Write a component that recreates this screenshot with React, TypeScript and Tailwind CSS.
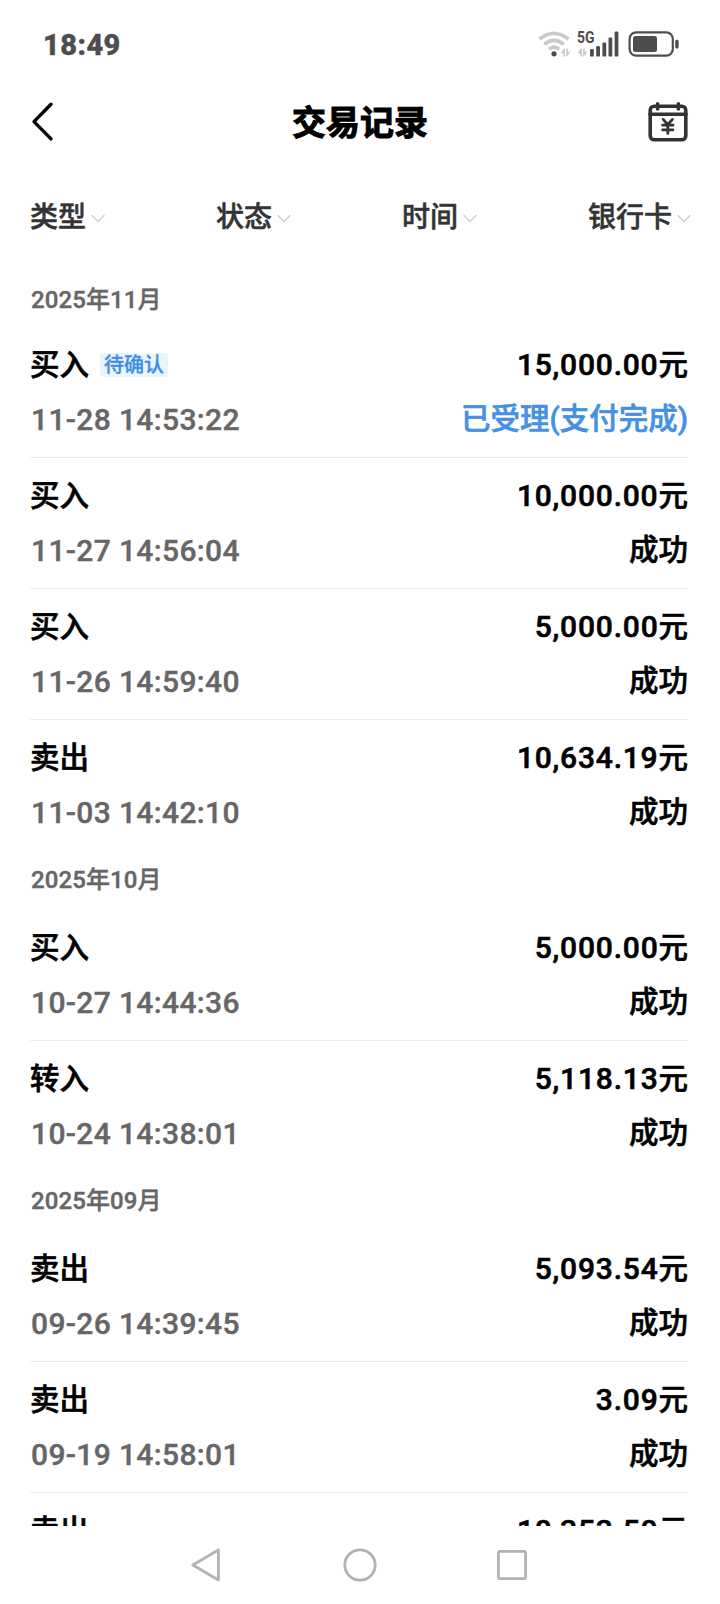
import React from 'react';

interface Transaction {
  type: string;
  tag?: string;
  time: string;
  amount: string;
  status: string;
  pending?: boolean;
}

interface MonthGroup {
  month: string;
  items: Transaction[];
}

const filters = ['类型', '状态', '时间', '银行卡'];

const groups: MonthGroup[] = [
  {
    month: '2025年11月',
    items: [
      { type: '买入', tag: '待确认', time: '11-28 14:53:22', amount: '15,000.00', status: '已受理(支付完成)', pending: true },
      { type: '买入', time: '11-27 14:56:04', amount: '10,000.00', status: '成功' },
      { type: '买入', time: '11-26 14:59:40', amount: '5,000.00', status: '成功' },
      { type: '卖出', time: '11-03 14:42:10', amount: '10,634.19', status: '成功' },
    ],
  },
  {
    month: '2025年10月',
    items: [
      { type: '买入', time: '10-27 14:44:36', amount: '5,000.00', status: '成功' },
      { type: '转入', time: '10-24 14:38:01', amount: '5,118.13', status: '成功' },
    ],
  },
  {
    month: '2025年09月',
    items: [
      { type: '卖出', time: '09-26 14:39:45', amount: '5,093.54', status: '成功' },
      { type: '卖出', time: '09-19 14:58:01', amount: '3.09', status: '成功' },
      { type: '卖出', time: '09-12 14:50:26', amount: '10,353.50', status: '成功' },
    ],
  },
];

function DataArrows({ x }: { x: number }) {
  return (
    <g transform={`translate(${x} 0)`} fill="#c9c9c9">
      <path d="M0 53.2 L3.6 48.4 H4.4 V56.6 H2.7 V53.2 Z" />
      <path d="M10 51.8 L6.4 56.6 H5.6 V48.4 H7.3 V51.8 Z" />
    </g>
  );
}

function StatusBar() {
  return (
    <div className="flex h-[88px] items-center justify-between pl-[43px] pr-[30px]">
      <span className="pt-[2px] text-[29px] font-extrabold leading-[86px] tracking-[0.5px] text-[#4d4d4d] [-webkit-text-stroke:0.5px]">18:49</span>
      <svg width="152" height="88" viewBox="538 0 152 88" fill="none">
        {/* wifi */}
        <g stroke="#c9c9c9" strokeWidth="3.6">
          <path d="M539.5 39.2 Q554 27.4 568.5 39.2" />
          <path d="M544.3 44.4 Q554 36.4 563.7 44.4" />
          <path d="M549 49.2 Q554 45 559 49.2" />
        </g>
        <circle cx="554" cy="53.8" r="2.6" fill="#4d4d4d" />
        <DataArrows x={560.5} />
        <DataArrows x={577.5} />
        <text x="577" y="43.4" fontSize="16.5" fontWeight="700" fill="#4d4d4d" textLength="17.5" lengthAdjust="spacingAndGlyphs">5G</text>
        {/* signal */}
        <g fill="#4d4d4d">
          <rect x="590" y="49" width="3.8" height="7.6" rx="1.2" />
          <rect x="596.2" y="46" width="3.8" height="10.6" rx="1.2" />
          <rect x="602.4" y="42.6" width="3.8" height="14" rx="1.2" />
          <rect x="608.5" y="37.6" width="3.8" height="19" rx="1.2" />
          <rect x="614.6" y="31.4" width="3.8" height="25.2" rx="1.2" />
        </g>
        {/* battery */}
        <rect x="629.6" y="32.4" width="43.2" height="23.2" rx="6.5" stroke="#4d4d4d" strokeWidth="2.2" />
        <rect x="633" y="36" width="24" height="16" rx="2.5" fill="#4d4d4d" />
        <rect x="675.2" y="39.8" width="3.4" height="8.6" rx="1.5" fill="#4d4d4d" />
      </svg>
    </div>
  );
}

function Header() {
  return (
    <div className="flex h-[68px] items-center justify-between pl-[31px] pr-[31px]">
      <svg width="42" height="44" viewBox="0 0 42 44" fill="none" stroke="#000" strokeWidth="3.4" strokeLinecap="round" strokeLinejoin="round">
        <path d="M20 4.3 L3 21.6 L20 38.9" />
      </svg>
      <h1 className="pt-[2px] text-[34px] font-bold leading-[66px] text-black [-webkit-text-stroke:1px_#000]">交易记录</h1>
      <svg width="42" height="44" viewBox="647 100 42 44" fill="none" stroke="#333" strokeWidth="3.6" strokeLinecap="round" strokeLinejoin="round">
        <rect x="650.2" y="106.2" width="35.6" height="33.6" rx="4" />
        <path d="M650 114.3 H686" />
        <path d="M657.6 103.8 V109 M678.4 103.8 V109" />
        <path d="M663.2 119.4 L667.8 124.6 L672.4 119.4 M667.8 124.6 V133.4 M662.6 125.2 H673 M662.6 129.8 H673" strokeWidth="2.8" />
      </svg>
    </div>
  );
}

function FilterBar() {
  return (
    <div className="flex h-[116px] items-center justify-between pt-[7px] pl-[30px] pr-[29px]">
      {filters.map((name) => (
        <button key={name} className="flex items-center gap-[5px] text-[28px] font-medium leading-[40px] text-[#333] [-webkit-text-stroke:0.5px]">
          {name}
          <svg className="mt-[2px]" width="14" height="9" viewBox="0 0 14 9" fill="none" stroke="#d0d0d0" strokeWidth="1.5">
            <path d="M0.6 1 L7 7.5 L13.4 1" />
          </svg>
        </button>
      ))}
    </div>
  );
}

function TransactionRow({ item, last }: { item: Transaction; last: boolean }) {
  return (
    <li className={`h-[131px] border-b pt-[10px] text-[30px] font-medium text-black [-webkit-text-stroke:0.6px] ${last ? 'border-transparent' : 'border-[#ebebeb]'}`}>
      <div className="flex items-center justify-between leading-[55px]">
        <div className="flex items-center text-[29.5px]">
          {item.type}
          {item.tag && (
            <span className="ml-[11px] h-6 rounded bg-[#e9f4fd] px-1 text-[20px] leading-6 text-[#3f8ee0] [-webkit-text-stroke:0.3px]">{item.tag}</span>
          )}
        </div>
        <span className="tracking-[0.8px]">
          {item.amount}
          <span className="text-[29.5px] tracking-normal">元</span>
        </span>
      </div>
      <div className="flex items-center justify-between leading-[53px]">
        <span className="pl-px tracking-[0.35px] text-[#666] [-webkit-text-stroke:0.4px]">{item.time}</span>
        <span className={item.pending ? 'text-[29.5px] text-[#4490e2]' : 'text-[29.5px]'}>{item.status}</span>
      </div>
    </li>
  );
}

function NavBar() {
  return (
    <div className="flex h-[78px] items-center justify-center bg-white">
      <svg width="340" height="78" viewBox="190 1526 340 78" fill="none" stroke="#b2b2b2" strokeWidth="2.8" strokeLinejoin="round">
        <path d="M192.8 1565 L218.4 1550 V1580 Z" />
        <circle cx="360" cy="1565" r="15.2" />
        <rect x="498.4" y="1551.4" width="27.2" height="27.2" rx="1.5" />
      </svg>
    </div>
  );
}

export default function App() {
  return (
    <div className="flex h-[1604px] w-[720px] flex-col overflow-hidden bg-white font-['Roboto','Noto_Sans_CJK_SC',sans-serif]">
      <StatusBar />
      <Header />
      <FilterBar />
      <main className="min-h-0 flex-1 overflow-hidden pl-[30px] pr-[32px]">
        {groups.map((group, index) => (
          <section key={group.month}>
            <h2 className={`pl-px text-[24px] font-medium tracking-[0.1px] text-[#666] [-webkit-text-stroke:0.4px] ${index === 0 ? 'h-[55px] leading-[56px]' : 'h-[59px] leading-[58px]'}`}>
              {group.month}
            </h2>
            <ul>
              {group.items.map((item, i) => (
                <TransactionRow key={item.time} item={item} last={i === group.items.length - 1} />
              ))}
            </ul>
          </section>
        ))}
      </main>
      <NavBar />
    </div>
  );
}
